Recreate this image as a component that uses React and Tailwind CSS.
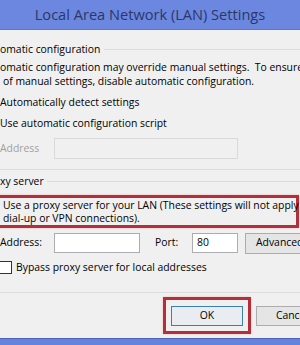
import React from 'react';

const font = { fontFamily: '"Open Sans", "Noto Sans", sans-serif' };

const App = () => {
  return (
    <div
      className="relative w-[300px] h-[345px] overflow-hidden bg-[#f0f0f0] text-[10.4px] text-black"
      style={font}
    >
      {/* Barra de título */}
      <div className="h-[30px] bg-[#6c87df] border-b border-[#5f78cc] flex items-center justify-center">
        <span className="text-[14.6px] text-[#2b3769] whitespace-nowrap">
          Local Area Network (LAN) Settings
        </span>
      </div>

      {/* Configuración automática */}
      <div className="mt-[12px] h-[14px] flex items-center">
        <span className="whitespace-nowrap leading-[14px] shrink-0">omatic configuration</span>
        <div className="flex-1 ml-[4px] border-t border-[#dcdcdc]" />
      </div>
      <div className="mt-[4px] leading-[14px] whitespace-nowrap">
        omatic configuration may override manual settings.&nbsp; To ensure
      </div>
      <div className="pl-[3px] leading-[14px] whitespace-nowrap">
        of manual settings, disable automatic configuration.
      </div>

      <div className="mt-[7px] leading-[14px] whitespace-nowrap">Automatically detect settings</div>
      <div className="mt-[7px] leading-[14px] whitespace-nowrap">Use automatic configuration script</div>

      <div className="mt-[8px] h-[21px] flex items-center">
        <span className="w-[54px] shrink-0 text-[#a0a0a0]">Address</span>
        <div className="w-[184px] h-[21px] shrink-0 border border-[#d9d9d9] bg-[#f0f0f0]" />
      </div>

      <div className="mt-[10px] border-t border-[#dcdcdc]" />

      {/* Servidor proxy */}
      <div className="mt-[4px] h-[14px] flex items-center">
        <span className="whitespace-nowrap leading-[14px] shrink-0">xy server</span>
        <div className="flex-1 ml-[3px] border-t border-[#dcdcdc]" />
      </div>

      <div className="mt-[7px] w-[309px] -ml-[10px] pl-[10px] border-[3px] border-[#b3303a] shadow-[0_0_2px_#f2b8bc] leading-[13px] pt-[1px] h-[33px]">
        <div className="whitespace-nowrap">Use a proxy server for your LAN (These settings will not apply to</div>
        <div className="whitespace-nowrap">dial-up or VPN connections).</div>
      </div>

      <div className="mt-[5px] h-[20px] flex items-center">
        <span className="w-[54px] shrink-0 whitespace-nowrap">Address:</span>
        <div className="w-[86px] h-[20px] shrink-0 border border-[#abadb3] bg-white" />
        <span className="ml-[15px] w-[37px] shrink-0">Port:</span>
        <div className="w-[46px] h-[20px] shrink-0 border border-[#abadb3] bg-white flex items-center pl-[4px]">80</div>
        <div className="ml-[7px] w-[80px] h-[21px] border border-[#acacac] bg-[#e5e5e5] flex items-center pl-[10px] whitespace-nowrap shrink-0">
          Advanced...
        </div>
      </div>

      <div className="mt-[8px] h-[13px] flex items-center">
        <div className="-ml-[1px] w-[13px] h-[13px] border border-[#333] bg-white shrink-0" />
        <span className="ml-[4px] whitespace-nowrap">Bypass proxy server for local addresses</span>
      </div>

      <div className="mt-[18px] border-t border-[#dcdcdc]" />

      {/* Botones */}
      <div className="mt-[4px] h-[37px] flex items-start">
        <div className="ml-[163px] w-[88px] h-[37px] border-[3px] border-[#b3303a] shadow-[0_0_2px_#f2b8bc] pt-[6px] pl-[5px] shrink-0">
          <div className="w-[72px] h-[20px] border border-[#3c7fb1] bg-[#e9edf1] flex items-center justify-center">
            OK
          </div>
        </div>
        <div className="ml-[5px] mt-[9px] w-[72px] h-[20px] border border-[#acacac] bg-[#e5e5e5] flex items-center justify-center shrink-0">
          Cancel
        </div>
      </div>

      <div className="mt-[4px] h-[8px] bg-[#6682df] border-t border-[#4d63b5]" />
    </div>
  );
};

export default App;
